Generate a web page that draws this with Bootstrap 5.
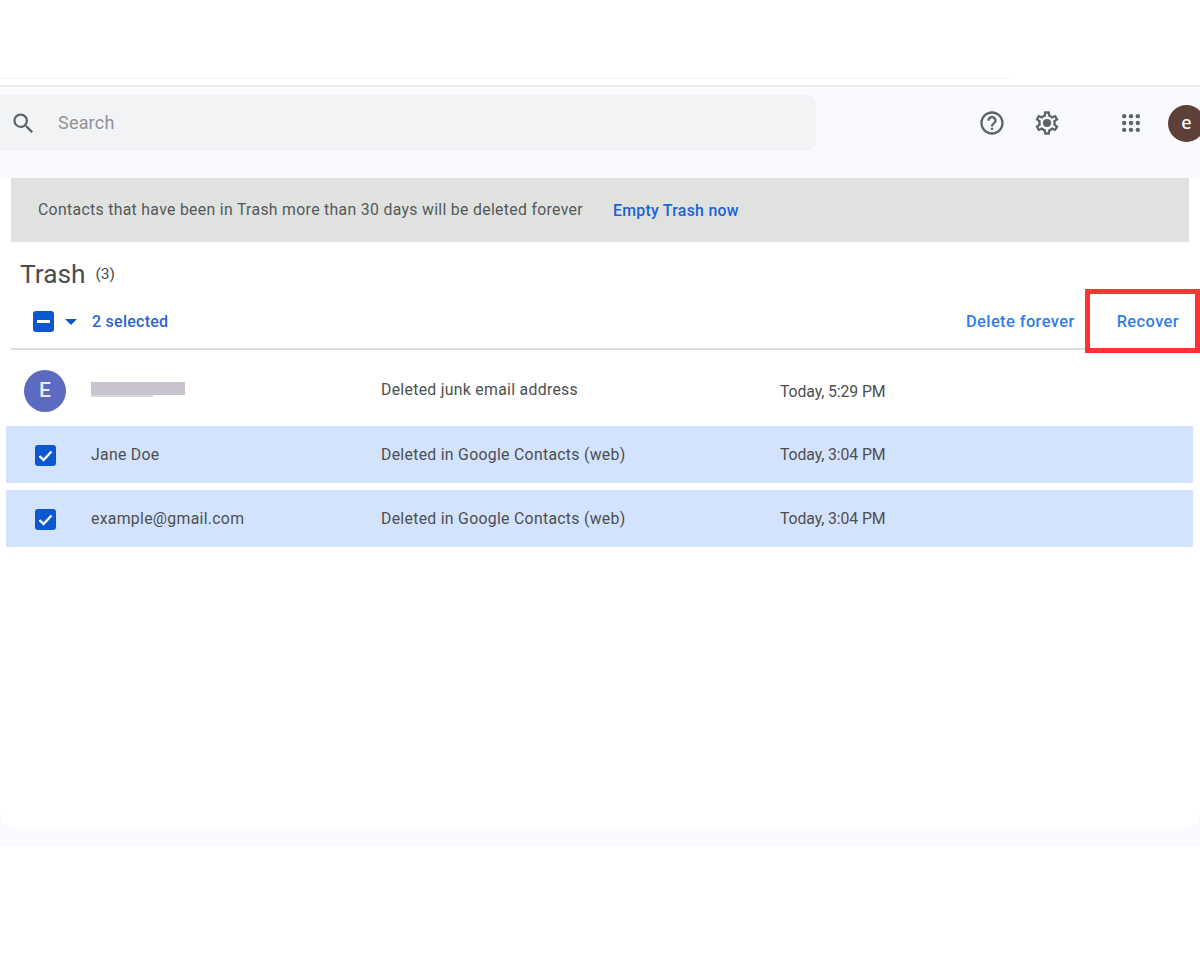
<!DOCTYPE html>
<html lang="en">
<head>
<meta charset="utf-8">
<title>Trash</title>
<link href="https://cdn.jsdelivr.net/npm/bootstrap@5.3.0/dist/css/bootstrap.min.css" rel="stylesheet">
<style>
html,body{height:960px;overflow:hidden}
body{background:#fff;font-family:Roboto,"Liberation Sans",sans-serif;color:#444746;position:relative}
.top-space{height:84px}
.top-rule{height:1px;width:1010px;background:#f6f6f6;position:relative;top:78px}
.shell{background:#f8fafd;border-top:2px solid #e9ebee;height:761px;display:flex;flex-direction:column}
.head-bar{height:91px;padding-top:8px;align-items:flex-start}
.search-box{width:816px;height:56px;background:#f1f3f4;border-radius:0 10px 10px 0;color:#909396;font-size:18px;padding-left:10px}
.search-box span{margin-left:21px;letter-spacing:.2px;padding-bottom:2px}
.head-icons{flex:1;height:56px;overflow:hidden}
.head-icons svg{flex:none}
.i-help{margin-left:162px}
.i-gear{margin-left:27px}
.i-grid{margin-left:60px}
.who{width:37px;height:37px;border-radius:50%;background:#5d4037;color:#fff;font-family:"Noto Sans",sans-serif;font-weight:500;font-size:18px;margin-left:27px;flex:none;padding-bottom:1px}
.sheet{background:#fff;height:651px;border-radius:0 0 16px 16px;display:flex;flex-direction:column}
.notice{margin:0 11px;height:64px;background:#e0e2df;padding:0 0 1px 27px;font-size:15.8px;color:#55585a;letter-spacing:.32px}
.notice a{margin-left:30px;color:#1a63d8;font-weight:500;text-decoration:none;letter-spacing:.3px;padding-top:2px}
.page-name{font-size:26.3px;color:#4a4d4f;padding:16px 0 0 20px;line-height:32px;height:48px}
.page-name small{font-size:15.5px;margin-left:10px;font-weight:400;vertical-align:4px}
.sel-bar{margin:0 11px;height:60px;border-bottom:2px solid #dadce0;padding:5px 0 0 22px;font-size:16.4px;font-weight:500;letter-spacing:.42px}
.tick{width:21px;height:21px;border-radius:3px;background:#0b57d0;flex:none}
.caret{width:0;height:0;border-left:6px solid transparent;border-right:6px solid transparent;border-top:6px solid #0b57d0;margin-left:11px}
.sel-count{color:#2a64d8;margin-left:15px;font-size:16px;letter-spacing:.25px;padding-top:1px}
.act{color:#2f7de8;text-decoration:none;padding-top:1px}
.act-del{margin-right:42px}
.act-rec{margin-right:10px}
.person{height:57px;margin:0 7px 7px 6px;font-size:15.8px;color:#4c4f52;letter-spacing:.3px}
.person.on{background:#d3e3fd}
.person.plain{height:66px;margin-top:8px;margin-bottom:2px}
.slot{width:79px;display:flex;justify-content:center;flex:none}
.person.on .slot{padding-top:1px}
.person.plain .slot{padding-right:1px}
.who-e{width:42px;height:42px;border-radius:50%;background:#5c6bc0;color:#e8eaf6;font-size:21px;font-weight:500}
.c-name{width:296px;padding-left:6px;flex:none}
.c-why{width:399px;flex:none;padding-bottom:2px}
.person.on .c-why{padding-bottom:0}
.c-when{letter-spacing:-.1px;padding-top:1px}
.blur-name{display:block;width:94px;height:13px;background:#c8c3cd;margin-top:-5px;position:relative}
.blur-name::after{content:"";position:absolute;left:0;top:13px;width:62px;height:2px;background:#d8d8d8}
.callout{position:absolute;left:1085px;top:289px;width:115px;height:64px;border:5px solid #ff3333;pointer-events:none}
</style>
</head>
<body>
<div class="top-rule"></div>
<div class="top-space"></div>
<div class="shell">
  <div class="head-bar d-flex">
    <div class="search-box d-flex align-items-center">
      <svg width="27" height="27" viewBox="0 0 24 24" fill="#5f6368"><path d="M15.5 14h-.79l-.28-.27A6.47 6.47 0 0 0 16 9.5 6.5 6.5 0 1 0 9.5 16c1.61 0 3.09-.59 4.23-1.57l.27.28v.79l5 4.99L20.49 19l-4.99-5zm-6 0C7.01 14 5 11.99 5 9.5S7.01 5 9.5 5 14 7.01 14 9.5 11.99 14 9.5 14z"/></svg>
      <span>Search</span>
    </div>
    <div class="head-icons d-flex align-items-center">
      <svg class="i-help" width="28" height="28" viewBox="0 0 24 24" fill="#5f6368"><path d="M11 18h2v-2h-2v2zm1-16C6.48 2 2 6.48 2 12s4.48 10 10 10 10-4.48 10-10S17.52 2 12 2zm0 18c-4.41 0-8-3.59-8-8s3.59-8 8-8 8 3.59 8 8-3.59 8-8 8zm0-14c-2.21 0-4 1.79-4 4h2c0-1.1.9-2 2-2s2 .9 2 2c0 2-3 1.75-3 5h2c0-2.25 3-2.5 3-5 0-2.21-1.79-4-4-4z"/></svg>
      <svg class="i-gear" width="28" height="28" viewBox="0 0 24 24" fill="#5f6368"><path d="M19.43 12.98c.04-.32.07-.64.07-.98s-.03-.66-.07-.98l2.11-1.65c.19-.15.24-.42.12-.64l-2-3.46c-.12-.22-.39-.3-.61-.22l-2.49 1c-.52-.4-1.08-.73-1.69-.98l-.38-2.65A.49.49 0 0 0 14 2h-4c-.25 0-.46.18-.49.42l-.38 2.65c-.61.25-1.17.59-1.69.98l-2.49-1c-.23-.09-.49 0-.61.22l-2 3.46c-.13.22-.07.49.12.64l2.11 1.65c-.04.32-.07.65-.07.98s.03.66.07.98l-2.11 1.65c-.19.15-.24.42-.12.64l2 3.46c.12.22.39.3.61.22l2.49-1c.52.4 1.08.73 1.69.98l.38 2.65c.03.24.24.42.49.42h4c.25 0 .46-.18.49-.42l.38-2.65c.61-.25 1.17-.59 1.69-.98l2.49 1c.23.09.49 0 .61-.22l2-3.46c.12-.22.07-.49-.12-.64l-2.11-1.65zM17.45 11.27c.04.31.05.52.05.73s-.02.43-.05.73l-.14 1.13.89.7 1.08.84-.7 1.21-1.27-.51-1.04-.42-.9.68c-.43.32-.84.56-1.25.73l-1.06.43-.16 1.13-.2 1.35h-1.4l-.19-1.35-.16-1.13-1.06-.43c-.43-.18-.83-.41-1.23-.71l-.91-.7-1.06.43-1.27.51-.7-1.21 1.08-.84.89-.7-.14-1.13c-.03-.31-.05-.54-.05-.74s.02-.43.05-.73l.14-1.13-.89-.7-1.08-.84.7-1.21 1.27.51 1.04.42.9-.68c.43-.32.84-.56 1.25-.73l1.06-.43.16-1.13.2-1.35h1.39l.19 1.35.16 1.13 1.06.43c.43.18.83.41 1.23.71l.91.7 1.06-.43 1.27-.51.7 1.21-1.07.85-.89.7.14 1.13z"/><circle cx="12" cy="12" r="3.5"/></svg>
      <svg class="i-grid" width="20" height="20" viewBox="0 0 22 22" fill="#5f6368"><circle cx="3.5" cy="3.5" r="2.4"/><circle cx="11" cy="3.5" r="2.4"/><circle cx="18.5" cy="3.5" r="2.4"/><circle cx="3.5" cy="11" r="2.4"/><circle cx="11" cy="11" r="2.4"/><circle cx="18.5" cy="11" r="2.4"/><circle cx="3.5" cy="18.5" r="2.4"/><circle cx="11" cy="18.5" r="2.4"/><circle cx="18.5" cy="18.5" r="2.4"/></svg>
      <div class="who d-flex align-items-center justify-content-center">e</div>
    </div>
  </div>
  <div class="sheet">
    <div class="notice d-flex align-items-center">
      <span>Contacts that have been in Trash more than 30 days will be deleted forever</span>
      <a href="#">Empty Trash now</a>
    </div>
    <div class="page-name">Trash<small>(3)</small></div>
    <div class="sel-bar d-flex align-items-center">
      <div class="tick d-flex align-items-center justify-content-center">
        <svg width="21" height="21" viewBox="0 0 21 21"><rect x="4" y="9" width="13" height="3" fill="#fff"/></svg>
      </div>
      <span class="caret"></span>
      <span class="sel-count">2 selected</span>
      <a class="act act-del ms-auto" href="#">Delete forever</a>
      <a class="act act-rec" href="#">Recover</a>
    </div>
    <div class="person plain d-flex align-items-center">
      <div class="slot"><div class="who-e d-flex align-items-center justify-content-center">E</div></div>
      <div class="c-name"><span class="blur-name"></span></div>
      <div class="c-why">Deleted junk email address</div>
      <div class="c-when">Today, 5:29 PM</div>
    </div>
    <div class="person on d-flex align-items-center">
      <div class="slot"><div class="tick d-flex align-items-center justify-content-center"><svg width="21" height="21" viewBox="0 0 21 21"><path d="M4.5 11l4 4 8-8.5" fill="none" stroke="#fff" stroke-width="2.4"/></svg></div></div>
      <div class="c-name">Jane Doe</div>
      <div class="c-why">Deleted in Google Contacts (web)</div>
      <div class="c-when">Today, 3:04 PM</div>
    </div>
    <div class="person on d-flex align-items-center">
      <div class="slot"><div class="tick d-flex align-items-center justify-content-center"><svg width="21" height="21" viewBox="0 0 21 21"><path d="M4.5 11l4 4 8-8.5" fill="none" stroke="#fff" stroke-width="2.4"/></svg></div></div>
      <div class="c-name">example@gmail.com</div>
      <div class="c-why">Deleted in Google Contacts (web)</div>
      <div class="c-when">Today, 3:04 PM</div>
    </div>
  </div>
</div>
<div class="callout"></div>
<script src="https://cdn.jsdelivr.net/npm/bootstrap@5.3.0/dist/js/bootstrap.bundle.min.js"></script>
</body>
</html>
